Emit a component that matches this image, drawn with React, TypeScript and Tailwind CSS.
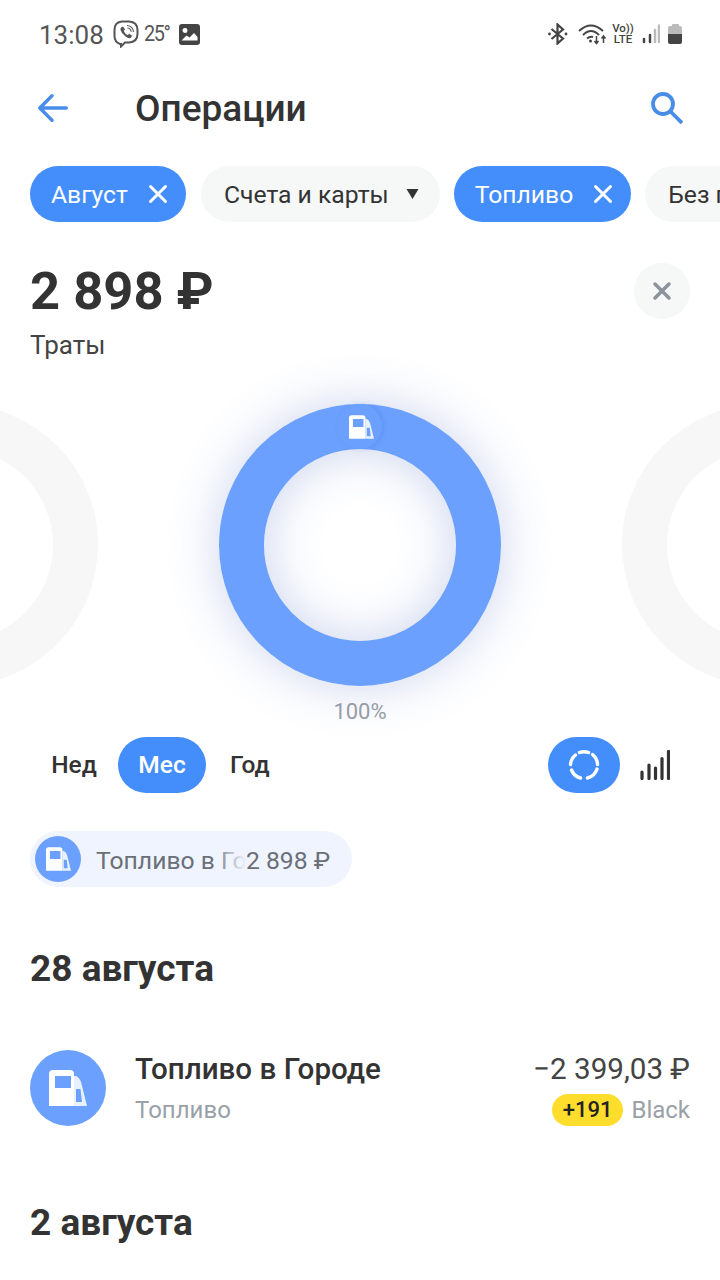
import React from 'react';
import { X } from 'lucide-react';

const font = "font-['Roboto',sans-serif]";

const PumpIcon: React.FC<{ className?: string }> = ({ className }) => (
  <svg viewBox="0 0 38 36" className={className} fill="currentColor">
    <path
      fillRule="evenodd"
      d="M4 0H21Q25 0 25 4V36H0V4Q0 0 4 0ZM6 6V18H22V6Z"
    />
    <path
      fillRule="evenodd"
      opacity="0.85"
      d="M25 6H27Q30 7 32 12L38 36H25ZM27 19V32H33L31.500 19Z"
    />
  </svg>
);

const ViberIcon = () => (
  <svg viewBox="0 0 26 28" className="w-[26px] h-[28px] text-[#555]" fill="none" stroke="currentColor">
    <path strokeWidth="2" d="M8 24H7Q1.5 22 1.5 16V10Q1.500 2 9 1.500H16Q24.500 2 24.500 10V14Q24.500 22 16 22.500H12L8 26.500Z" />
    <path fill="currentColor" stroke="none" d="M8 7.500L10 6.500L12 9.500L10.800 11Q11.800 14 14.800 15L16.300 13.800L19 15.800L18 17.800Q16 19 12.500 16.500Q8.500 13.500 7.500 10Q7.300 8.500 8 7.500Z" />
    <path strokeWidth="1.100" d="M14 5.500Q20 6 20.500 12M14.500 8Q17.800 8.500 18.200 11.800" />
  </svg>
);

const ImageIcon = () => (
  <svg viewBox="0 0 21 21" className="w-[21px] h-[21px] text-[#444]" fill="currentColor">
    <path
      fillRule="evenodd"
      d="M3 0H18Q21 0 21 3V18Q21 21 18 21H3Q0 21 0 18V3Q0 0 3 0ZM6 4A2.500 2.500 0 1 0 6.010 9A2.500 2.500 0 0 0 6 4ZM2.500 16.500H18.500V13L15 9L10.500 13.500L7.500 11.500Z"
    />
  </svg>
);

const BluetoothIcon = () => (
  <svg viewBox="0 0 20 22" className="w-[20px] h-[22px] text-[#444]" fill="none" stroke="currentColor" strokeWidth="2.200">
    <path d="M3.500 6L15 15.500L9.500 20.500V1.500L15 6.500L3.500 16" />
    <circle cx="1.500" cy="11" r="1.400" fill="currentColor" stroke="none" />
    <circle cx="18" cy="11" r="1.400" fill="currentColor" stroke="none" />
  </svg>
);

const WifiIcon = () => (
  <svg viewBox="0 0 30 22" className="w-[30px] h-[22px] text-[#444]" fill="none" stroke="currentColor" strokeWidth="2">
    <path d="M1 8Q13 -3 25 8M5 12Q13 4 21 12M9 15.500Q12 13 15 14" />
    <circle cx="12.500" cy="18" r="1.500" fill="currentColor" stroke="none" />
    <path strokeWidth="1.500" d="M18.500 13V20M16.500 18L18.500 20.500L20.500 18M25.500 20V13M23.500 15.500L25.500 13L27.500 15.500" />
  </svg>
);

const SignalIcon = () => (
  <svg viewBox="0 0 18 20" className="w-[18px] h-[20px]" fill="none" strokeWidth="2.500" strokeLinecap="round">
    <path stroke="#444" d="M2 18V15M8 18V11" />
    <path stroke="#bbb" d="M13 18V6M17 18V1.500" />
  </svg>
);

const BatteryIcon = () => (
  <div className="flex flex-col items-center w-[14px]">
    <div className="w-[7px] h-[2px] bg-[#bbb] rounded-t-[1px]" />
    <div className="w-[14px] h-[8px] bg-[#bbb] rounded-t-[2px]" />
    <div className="w-[14px] h-[10px] bg-[#444] rounded-b-[2px]" />
  </div>
);

const StatusBar = () => (
  <div className="h-[68px] pl-[39px] pr-[38px] flex items-center justify-between text-[#555]">
    <div className="flex items-center">
      <span className="text-[26px] leading-none w-[74px] pt-[2px]">13:08</span>
      <ViberIcon />
      <span className="ml-[5px] text-[22px] leading-none tracking-[-1.500px] w-[35px] scale-x-[0.9] origin-left">25°</span>
      <ImageIcon />
    </div>
    <div className="flex items-center">
      <BluetoothIcon />
      <div className="w-[10px]" />
      <WifiIcon />
      <div className="ml-[4px] w-[22px] font-medium text-[#444] text-[11.500px] leading-[11px] text-center">
        <div>Vo))</div>
        <div>LTE</div>
      </div>
      <div className="w-[8px]" />
      <SignalIcon />
      <div className="w-[8px]" />
      <BatteryIcon />
    </div>
  </div>
);

const FilterChip: React.FC<{ label: string }> = ({ label }) => (
  <div className="h-14 shrink-0 rounded-full bg-[#448efb] pl-[21px] pr-[13px] flex items-center text-white text-[24.700px]">
    <span className="pt-[2px]">{label}</span>
    <X className="ml-[15px] w-[30px] h-[30px]" strokeWidth={2.400} />
  </div>
);

const Filters = () => (
  <div className="mt-[18px] pl-[30px] flex gap-[14px] overflow-hidden">
    <FilterChip label="Август" />
    <div className="ml-px h-14 shrink-0 rounded-full bg-[#f6f7f7] pl-[23px] pr-[21px] flex items-center text-[#333] text-[24.700px]">
      <span className="pt-[2px]">Счета и карты</span>
      <svg viewBox="0 0 12 10" className="ml-[17px] w-[13px] h-[10px]" fill="#333">
        <path d="M0 0H12L6 10Z" />
      </svg>
    </div>
    <FilterChip label="Топливо" />
    <div className="h-14 shrink-0 rounded-full bg-[#f6f7f7] pl-[23px] pr-[22px] pt-[2px] flex items-center text-[#333] text-[24.700px] whitespace-nowrap">
      Без пополнений
    </div>
  </div>
);

const Summary = () => (
  <div className="mt-[41px] px-[30px]">
    <div className="flex items-center justify-between h-14">
      <span className="text-[52.500px] font-bold text-[#333] leading-none">2 898 ₽</span>
      <div className="w-14 h-14 rounded-full bg-[#f6f7f7] flex items-center justify-center text-[#8d939c]">
        <X className="w-[28px] h-[28px]" strokeWidth={3} />
      </div>
    </div>
    <div className="mt-[10px] text-[26px] leading-8 text-[#444]">Траты</div>
  </div>
);

const Chart = () => (
  <div className="relative pt-[43px]">
    <div className="absolute top-[43px] left-[-184px] w-[282px] h-[282px] rounded-full border-[45px] border-[#f7f7f8]" />
    <div className="absolute top-[43px] left-[622px] w-[282px] h-[282px] rounded-full border-[45px] border-[#f7f7f8]" />
    <div className="relative mx-auto w-[282px] h-[282px] rounded-full border-[45px] border-[#6ca0ff] shadow-[0_0_50px_rgba(70,100,190,0.28),inset_0_0_50px_rgba(70,100,190,0.28)]">
      <div className="absolute top-[-45px] left-[73px] w-[45px] h-[45px] pl-[3px] rounded-full bg-[#6ca0ff] shadow-[2px_0_5px_rgba(60,100,210,0.22)] flex items-center justify-center text-white">
        <PumpIcon className="w-[25px] h-[24px]" />
      </div>
    </div>
    <div className="mt-[13px] h-[26px] text-center text-[22px] leading-[26px] text-[#9aa0a8]">100%</div>
  </div>
);

const Controls = () => (
  <div className="mt-[12px] pl-[30px] pr-[50px] h-14 flex items-center justify-between">
    <div className="flex items-center text-[24.500px] font-medium">
      <span className="w-[88px] text-center text-[#333]">Нед</span>
      <span className="w-[88px] h-14 rounded-full bg-[#448efb] text-white flex items-center justify-center">Мес</span>
      <span className="ml-[24px] text-[#333]">Год</span>
    </div>
    <div className="flex items-center">
      <div className="w-[72px] h-14 rounded-full bg-[#448efb] flex items-center justify-center">
        <svg viewBox="0 0 32 32" className="w-8 h-8" fill="none" stroke="white" strokeWidth="3.400" strokeLinecap="round">
          <path d="M11.500 3.500A13.500 13.500 0 0 1 20.500 3.500M24.500 5.500A13.500 13.500 0 0 1 29.500 15.500M29 20A13.500 13.500 0 0 1 19.500 29M12.500 29A13.500 13.500 0 0 1 3.500 21M2.500 15.500A13.500 13.500 0 0 1 7.500 6" />
        </svg>
      </div>
      <svg viewBox="0 0 30 30" className="ml-[20px] w-[30px] h-[30px]" fill="none" stroke="#333" strokeWidth="3.200" strokeLinecap="round">
        <path d="M2 28.500V22M9 28.500V15M15.500 28.500V18M22 28.500V8.500M28.500 28.500V1.500" />
      </svg>
    </div>
  </div>
);

const MerchantPill = () => (
  <div className="mt-[38px] ml-[30px] w-[322px] h-14 rounded-full bg-[#eff4fe] pl-[5px] flex items-center">
    <div className="w-[46px] h-[46px] rounded-full bg-[#6ca0ff] flex items-center justify-center text-white">
      <PumpIcon className="w-[25px] h-[24px]" />
    </div>
    <div className="relative ml-[15px] mt-[3px] w-[150px] overflow-hidden whitespace-nowrap text-[24.700px] text-[#6a6f78]">
      Топливо в Городе
      <div className="absolute inset-y-0 right-0 w-[34px] bg-gradient-to-r from-[#eff4fe]/0 to-[#eff4fe]" />
    </div>
    <span className="mt-[3px] text-[24.700px] text-[#6a6f78]">2 898 ₽</span>
  </div>
);

const DayHeading: React.FC<{ label: string; className: string }> = ({ label, className }) => (
  <div className={`px-[30px] h-11 text-[37px] leading-[44px] font-bold text-[#333] ${className}`}>{label}</div>
);

const Transaction = () => (
  <div className="mt-[59px] px-[30px] flex items-center justify-between h-[76px]">
    <div className="flex items-center">
      <div className="w-[76px] h-[76px] rounded-full bg-[#6ca0ff] flex items-center justify-center text-white">
        <PumpIcon className="w-[38px] h-[36px]" />
      </div>
      <div className="ml-[29px] pt-[2px]">
        <div className="text-[29.600px] leading-[36px] font-medium text-[#333] mt-[-2px]">Топливо в Городе</div>
        <div className="mt-[7px] text-[24px] leading-[32px] text-[#9aa0a8]">Топливо</div>
      </div>
    </div>
    <div className="flex flex-col items-end pt-[3px]">
      <div className="text-[29.600px] leading-[36px] text-[#444] mt-[-2px]">−2 399,03 ₽</div>
      <div className="mt-[7px] flex items-center">
        <span className="h-8 px-[11px] rounded-full bg-[#ffdd2d] text-[22px] leading-8 font-medium text-[#222]">+191</span>
        <span className="ml-[8px] text-[24px] leading-8 text-[#9aa0a8]">Black</span>
      </div>
    </div>
  </div>
);

const App: React.FC = () => {
  return (
    <div className={`w-[720px] h-[1280px] bg-white overflow-hidden ${font}`}>
      <StatusBar />
      <div className="h-20 pl-[38px] pr-[37px] flex items-center justify-between">
        <div className="flex items-center">
          <svg viewBox="0 0 30 28" className="w-[30px] h-[28px] text-[#4a8de8]" fill="none" stroke="currentColor" strokeWidth="3.400" strokeLinecap="round" strokeLinejoin="round">
            <path d="M28.300 14H2M14 1.800L1.800 14L14 26.200" />
          </svg>
          <h1 className="ml-[67px] text-[37px] font-medium text-[#333] leading-none">Операции</h1>
        </div>
        <svg viewBox="0 0 32 32" className="w-8 h-8 text-[#4a8de8]" fill="none" stroke="currentColor" strokeWidth="3.800">
          <circle cx="12" cy="12" r="10" />
          <path d="M19 19L31 31" />
        </svg>
      </div>
      <Filters />
      <Summary />
      <Chart />
      <Controls />
      <MerchantPill />
      <DayHeading label="28 августа" className="mt-[60px]" />
      <Transaction />
      <DayHeading label="2 августа" className="mt-[75px]" />
    </div>
  );
};

export default App;
